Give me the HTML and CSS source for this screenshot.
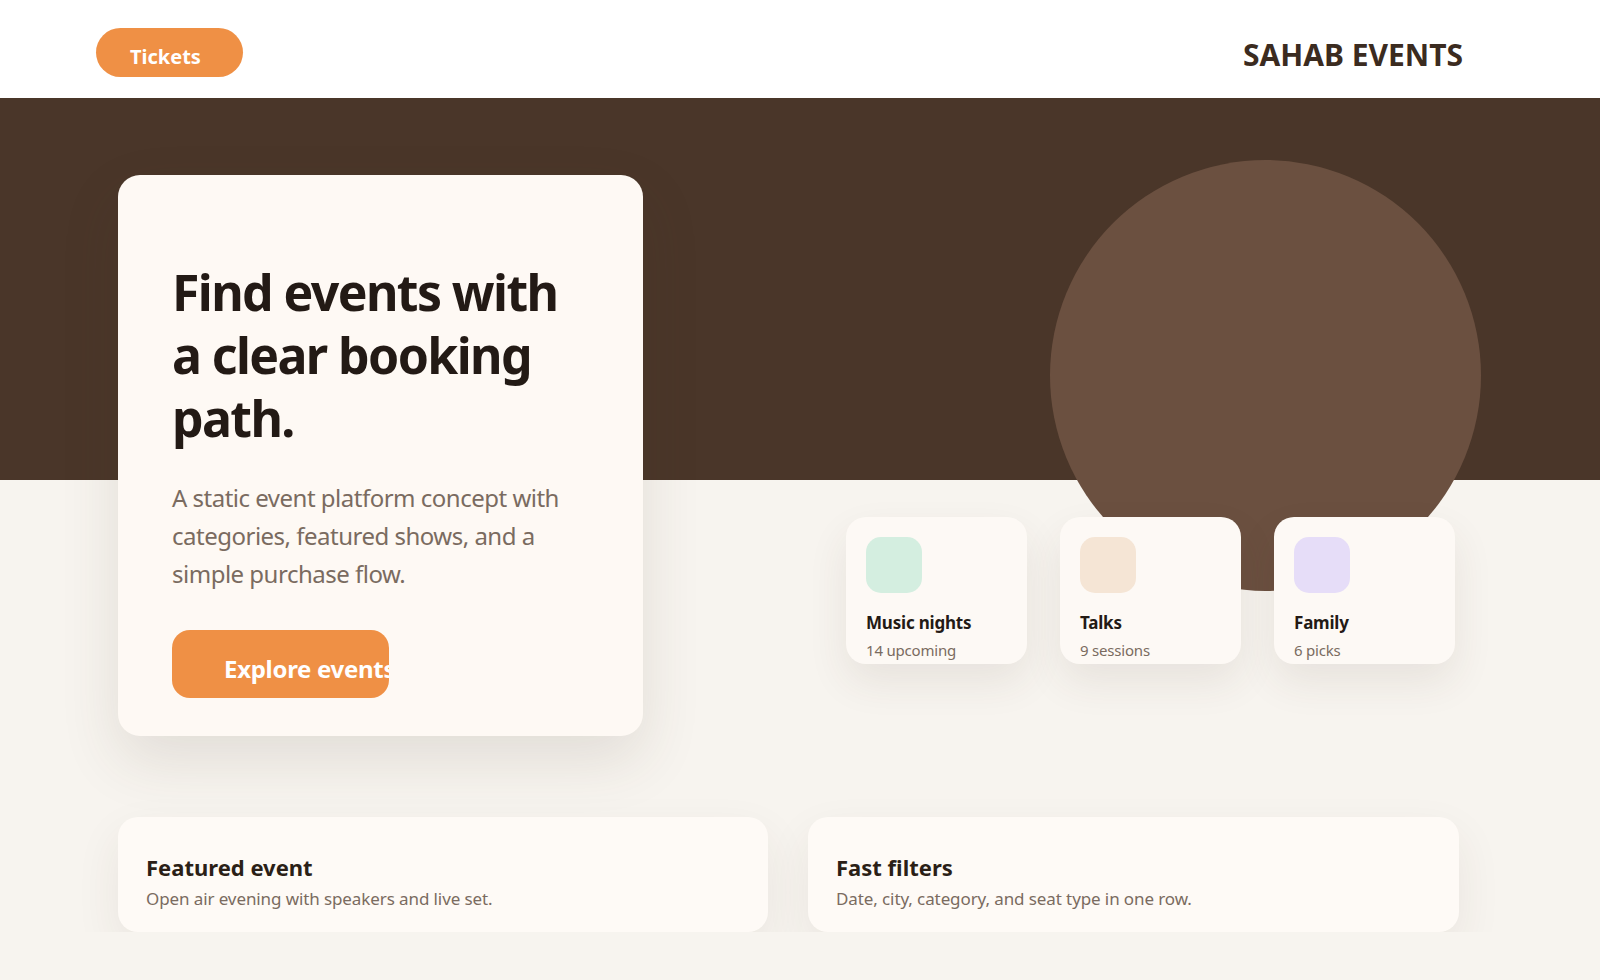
FILE: index.html
```html
<!DOCTYPE html>
<html lang="en">
<head>
    <meta charset="UTF-8">
    <meta name="viewport" content="width=device-width, initial-scale=1.0">
    <title>Sahab Events</title>
    <link rel="stylesheet" href="styles.css">
</head>
<body>
    <header class="topbar">
        <a class="ticket-btn" href="#">Tickets</a>
        <div class="brand">SAHAB EVENTS</div>
    </header>

    <!-- Hero -->
    <section class="hero">
        <div class="hero-inner">
            <div class="hero-card">
                <h1>Find events with a clear booking path.</h1>
                <p class="lead">A static event platform concept with categories, featured shows, and a simple purchase flow.</p>
                <a class="explore-btn" href="#">Explore events</a>
            </div>

            <div class="hero-side">
                <div class="hero-circle"></div>
                <div class="categories">
                    <div class="cat-card">
                        <div class="cat-icon mint"></div>
                        <div class="cat-title">Music nights</div>
                        <div class="cat-meta">14 upcoming</div>
                    </div>
                    <div class="cat-card">
                        <div class="cat-icon peach"></div>
                        <div class="cat-title">Talks</div>
                        <div class="cat-meta">9 sessions</div>
                    </div>
                    <div class="cat-card">
                        <div class="cat-icon lilac"></div>
                        <div class="cat-title">Family</div>
                        <div class="cat-meta">6 picks</div>
                    </div>
                </div>
            </div>
        </div>
    </section>

    <!-- Highlights -->
    <section class="highlights">
        <div class="info-card">
            <h3>Featured event</h3>
            <p>Open air evening with speakers and live set.</p>
        </div>
        <div class="info-card">
            <h3>Fast filters</h3>
            <p>Date, city, category, and seat type in one row.</p>
        </div>
    </section>
</body>
</html>
```

FILE: styles.css
```css
* {
    margin: 0;
    padding: 0;
    box-sizing: border-box;
}

body {
    font-family: 'Noto Sans', 'Open Sans', sans-serif;
    color: #231a15;
    background-color: #f7f4ef;
    overflow: hidden;
}

a {
    text-decoration: none;
}

.topbar {
    height: 98px;
    background-color: white;
    display: flex;
    align-items: flex-start;
    justify-content: space-between;
    padding: 28px 137px 0 96px;
}

.ticket-btn {
    display: inline-block;
    width: 147px;
    height: 49px;
    padding: 12px 0 0 34px;
    border-radius: 25px;
    background-color: #ef9045;
    color: white;
    font-size: 20px;
    font-weight: 700;
    line-height: 34px;
}

.brand {
    margin-top: 6px;
    font-size: 30px;
    font-weight: 700;
    color: #3b2b20;
}

.hero {
    background: linear-gradient(to bottom, #4a3629 382px, transparent 382px);
    padding: 77px 0 0 118px;
}

.hero-inner {
    display: grid;
    grid-template-columns: 525px 816px;
}

.hero-card {
    position: relative;
    z-index: 2;
    background-color: #fef9f4;
    border-radius: 22px;
    padding: 56px 70px 38px 54px;
    box-shadow: 0 24px 60px rgba(74, 54, 41, 0.12);
}

.hero-card h1 {
    margin-top: 30px;
    font-size: 50px;
    line-height: 63px;
    font-weight: 700;
    letter-spacing: -1.6px;
    color: #231a15;
}

.lead {
    margin-top: 29px;
    font-size: 24px;
    line-height: 38px;
    color: #7a6b60;
    letter-spacing: -0.5px;
}

.explore-btn {
    display: block;
    width: 217px;
    height: 68px;
    margin-top: 37px;
    padding: 10px 0 0 52px;
    border-radius: 18px;
    background-color: #ef9045;
    color: white;
    font-size: 24px;
    font-weight: 700;
    line-height: 58px;
    white-space: nowrap;
    overflow: hidden;
    letter-spacing: -0.3px;
}

.hero-side {
    position: relative;
    padding-top: 342px;
}

.hero-circle {
    position: absolute;
    left: 407px;
    top: -15px;
    width: 431px;
    height: 431px;
    border-radius: 50%;
    background-color: #6b5040;
}

.categories {
    position: relative;
    display: grid;
    grid-template-columns: repeat(3, 181px);
    gap: 33px;
    margin-left: 203px;
}

.cat-card {
    height: 147px;
    padding: 20px 20px 4px;
    background-color: #fdf9f5;
    border-radius: 20px;
    box-shadow: 0 18px 40px rgba(74, 54, 41, 0.09);
}

.cat-icon {
    width: 56px;
    height: 56px;
    border-radius: 15px;
    margin-bottom: 19px;
}

.mint { background-color: #d4eee0; }
.peach { background-color: #f5e5d5; }
.lilac { background-color: #e6ddf8; }

.cat-title {
    font-size: 17px;
    line-height: 22px;
    font-weight: 700;
    letter-spacing: -0.2px;
}

.cat-meta {
    margin-top: 6px;
    font-size: 15px;
    line-height: 20px;
    color: #7a6b60;
    letter-spacing: -0.2px;
}

.highlights {
    display: grid;
    grid-template-columns: 650px 651px;
    gap: 40px;
    margin: 81px 0 0 118px;
}

.info-card {
    height: 115px;
    padding: 36px 28px 20px;
    background-color: #fefaf6;
    border-radius: 20px;
    box-shadow: 0 18px 45px rgba(74, 54, 41, 0.08);
}

.info-card h3 {
    font-size: 22px;
    line-height: 29px;
    font-weight: 700;
    color: #2b1f17;
}

.info-card p {
    margin-top: 6px;
    font-size: 17px;
    line-height: 22px;
    color: #7a6b60;
    letter-spacing: -0.1px;
}
```
